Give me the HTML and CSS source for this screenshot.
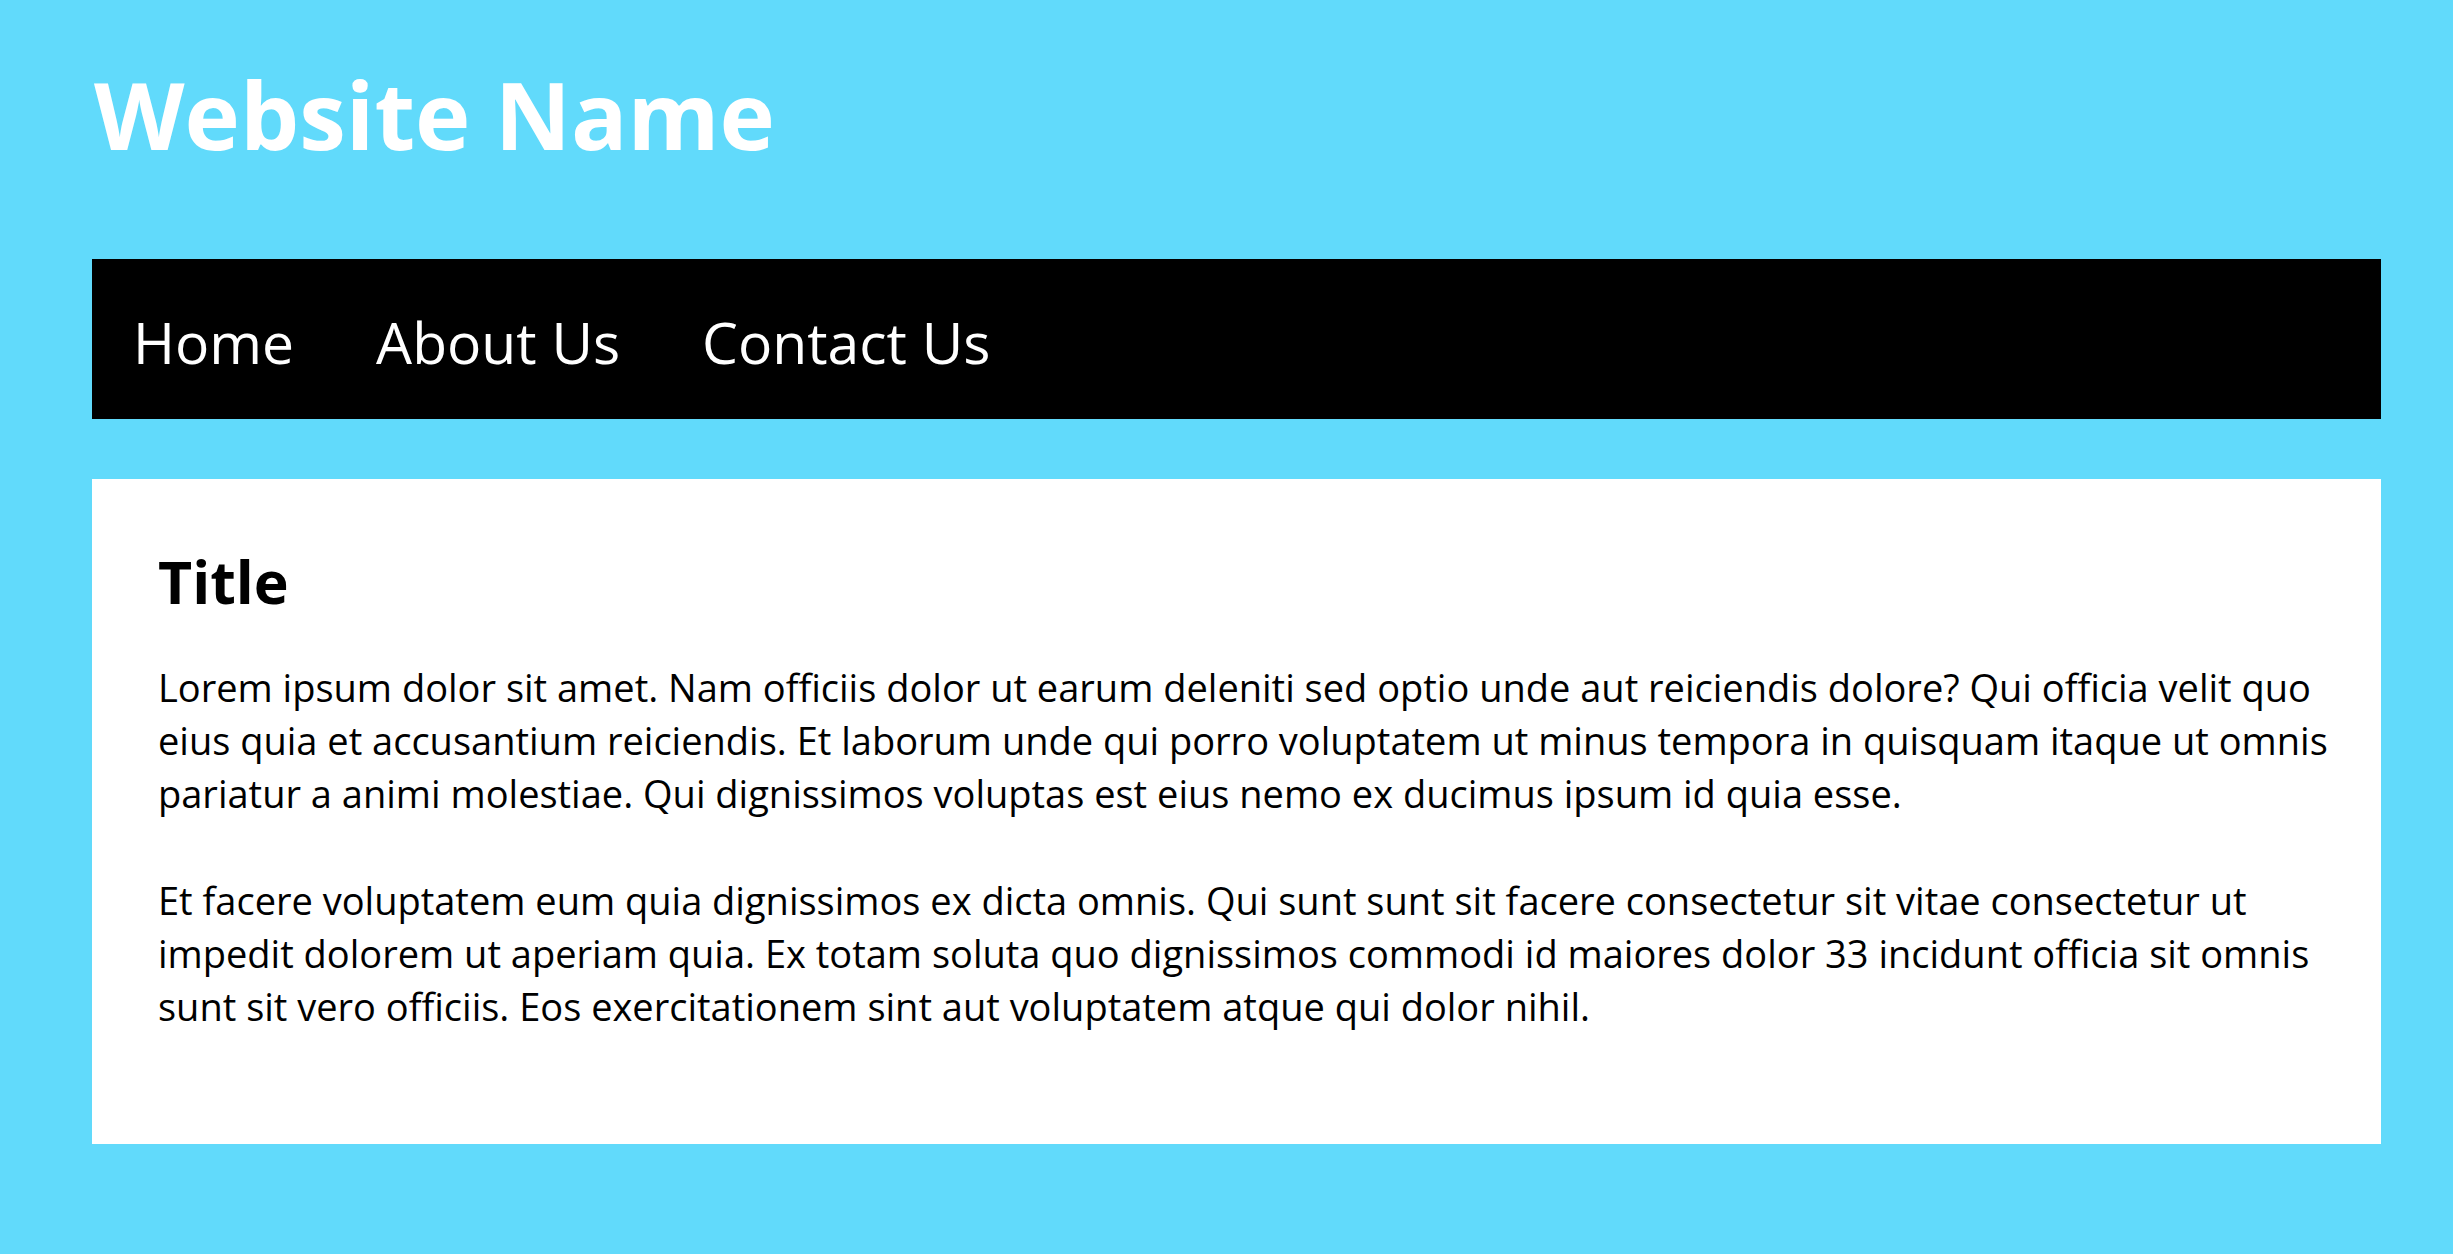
FILE: index.html
```html
<!DOCTYPE html>
<html lang="en">
<head>
<meta charset="utf-8">
<title>Website Name</title>
<link rel="stylesheet" href="styles.css">
</head>
<body>
<header class="site-header">
  <h1 class="site-title">Website Name</h1>
</header>
<nav class="main-nav">
  <a class="nav-link" href="#">Home</a>
  <a class="nav-link" href="#">About Us</a>
  <a class="nav-link" href="#">Contact Us</a>
</nav>
<main class="content">
  <h2 class="content-title">Title</h2>
  <p class="content-text">Lorem ipsum dolor sit amet. Nam officiis dolor ut earum deleniti sed optio unde aut reiciendis dolore? Qui officia velit quo eius quia et accusantium reiciendis. Et laborum unde qui porro voluptatem ut minus tempora in quisquam itaque ut omnis pariatur a animi molestiae. Qui dignissimos voluptas est eius nemo ex ducimus ipsum id quia esse.</p>
  <p class="content-text">Et facere voluptatem eum quia dignissimos ex dicta omnis. Qui sunt sunt sit facere consectetur sit vitae consectetur ut impedit dolorem ut aperiam quia. Ex totam soluta quo dignissimos commodi id maiores dolor 33 incidunt officia sit omnis sunt sit vero officiis. Eos exercitationem sint aut voluptatem atque qui dolor nihil.</p>
</main>
</body>
</html>
```
FILE: styles.css
```css
html, body {
  margin: 0;
  padding: 0;
}
body {
  background: #61dafb;
  font-family: "Open Sans", "Noto Sans", sans-serif;
  color: #000;
  padding: 0 72px 0 92px;
  min-height: 1254px;
  box-sizing: border-box;
}
.site-header {
  height: 259px;
  padding: 54px 0 0 2px;
  box-sizing: border-box;
}
.site-title {
  margin: 0;
  font-size: 93.7px;
  line-height: 120px;
  font-weight: 700;
  color: #fff;
}
.main-nav {
  display: flex;
  background: #000;
  height: 160px;
  padding: 6px 0 0 0;
  box-sizing: border-box;
}
.nav-link {
  color: #fff;
  text-decoration: none;
  font-size: 57px;
  line-height: 154px;
  padding: 0 41px;
}
.content {
  display: block;
  margin-top: 60px;
  background: #fff;
  height: 665px;
  box-sizing: border-box;
  padding: 62px 32px 0 66px;
}
.content-title {
  margin: 0 0 40px;
  font-size: 59px;
  line-height: 80px;
  font-weight: 700;
}
.content-text {
  margin: 0 0 53px;
  font-size: 38px;
  line-height: 53.2px;
}
```
